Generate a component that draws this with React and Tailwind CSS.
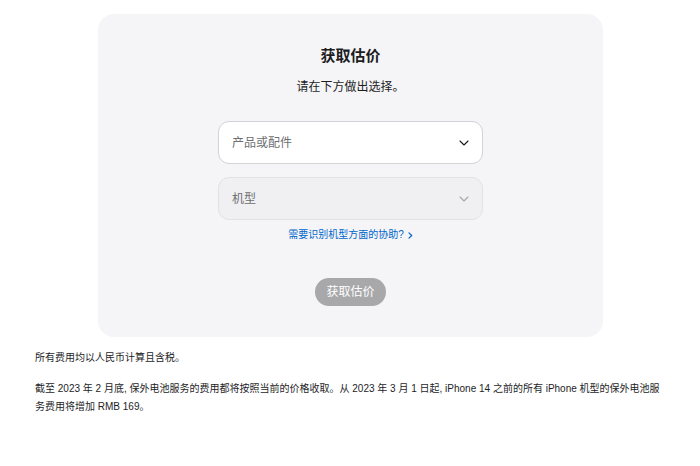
const Chevron = ({ className }) => (
  <svg width="10" height="6" viewBox="0 0 10 6" fill="none" className={className}>
    <path d="M1 1l4 4 4-4" stroke="currentColor" strokeWidth="1.1" strokeLinecap="round" strokeLinejoin="round" />
  </svg>
);

const App = () => {
  return (
    <div className="min-h-[466px] w-[700px] bg-white text-[#1d1d1f]" style={{ fontFamily: '"Liberation Sans", "Noto Sans CJK SC", sans-serif' }}>
      <div className="pt-[14px] px-[98px]">
        <div className="flex h-[323px] w-[505px] flex-col items-center rounded-[16px] bg-[#f5f5f7] pt-[32px]">
          <h1 className="text-[15px] font-bold leading-[20px]">获取估价</h1>
          <p className="mt-[12px] text-[12px] leading-[18px]">请在下方做出选择。</p>
          <div className="mt-[25px] flex h-[43px] w-[265px] items-center justify-between rounded-[11px] border border-[#d2d2d7] bg-white pl-[13px] pr-[13px]">
            <span className="text-[12px] text-[#6e6e73]">产品或配件</span>
            <Chevron className="text-[#1d1d1f]" />
          </div>
          <div className="mt-[13px] flex h-[43px] w-[265px] items-center justify-between rounded-[11px] border border-[#e2e2e6] bg-[#f0f0f2] pl-[13px] pr-[13px]">
            <span className="text-[12px] text-[#6e6e73]">机型</span>
            <Chevron className="text-[#a8a8ad]" />
          </div>
          <a className="mt-[8px] flex items-center gap-[4px] text-[10px] leading-[14px] text-[#0066cc]">
            需要识别机型方面的协助?
            <svg width="5" height="7" viewBox="0 0 5 7" fill="none">
              <path d="M1 0.8l2.7 2.7L1 6.2" stroke="currentColor" strokeWidth="1.2" strokeLinecap="round" strokeLinejoin="round" />
            </svg>
          </a>
          <button className="mt-[36px] flex h-[28px] w-[71px] items-center justify-center rounded-full bg-[#a8a8aa] text-[12px] text-white">
            获取估价
          </button>
        </div>
      </div>
      <div className="px-[35px] pt-[12px] text-[10px] leading-[18px] text-[#1d1d1f]">
        <p>所有费用均以人民币计算且含税。</p>
        <p className="mt-[13px] w-[630px]">
          截至 2023 年 2 月底, 保外电池服务的费用都将按照当前的价格收取。从 2023 年 3 月 1 日起, iPhone 14 之前的所有 iPhone 机型的保外电池服务费用将增加 RMB 169。
        </p>
      </div>
    </div>
  );
};

export default App;
